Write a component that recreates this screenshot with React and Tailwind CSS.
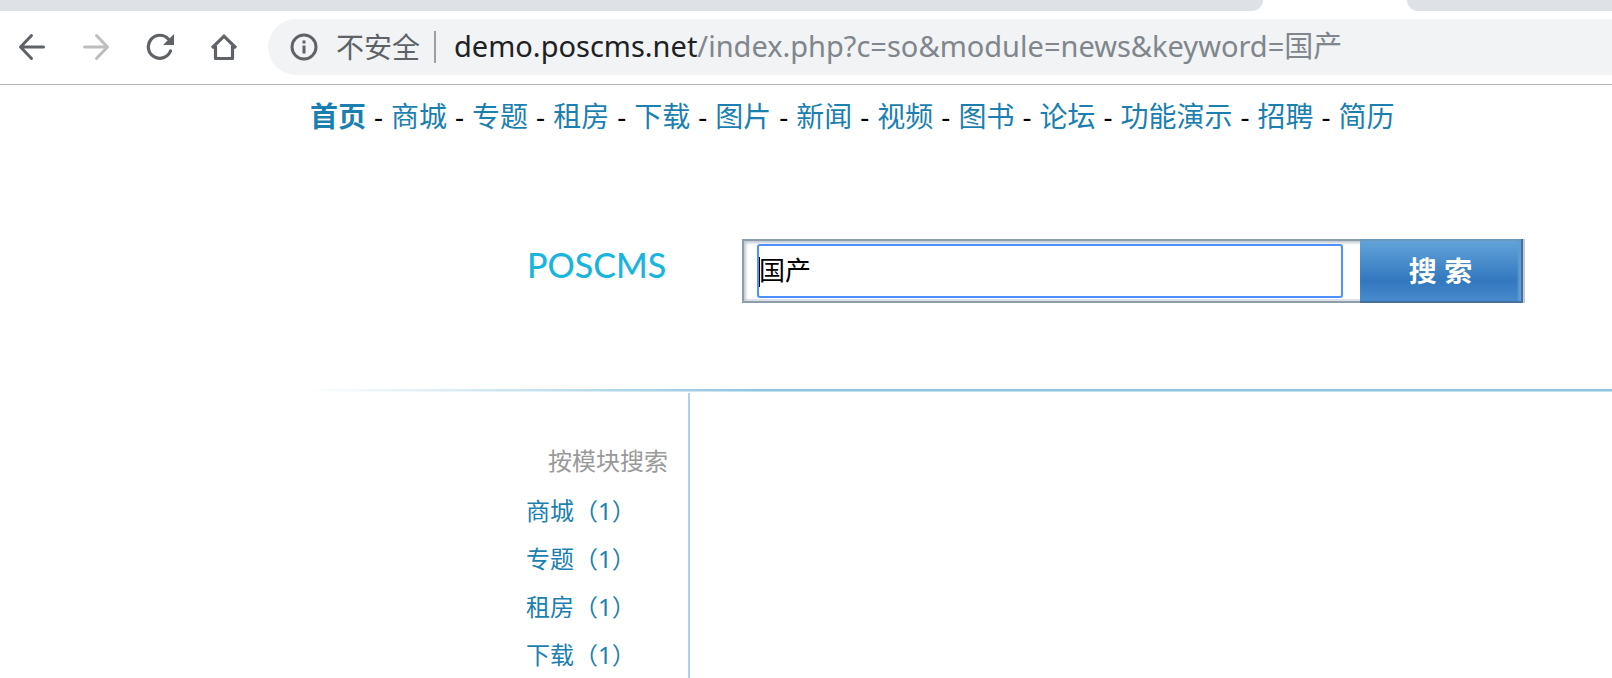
const navLinks = ['首页', '商城', '专题', '租房', '下载', '图片', '新闻', '视频', '图书', '论坛', '功能演示', '招聘', '简历'];

const modules = [
  { name: '商城', count: 1 },
  { name: '专题', count: 1 },
  { name: '租房', count: 1 },
  { name: '下载', count: 1 }
];

function BackIcon() {
  return (
    <svg width="28" height="28" viewBox="0 0 28 28" fill="none" stroke="currentColor" strokeWidth="3" strokeLinecap="round" strokeLinejoin="round">
      <path d="M25.5 14H2.500M13.500 2.500L2.500 14L13.500 25.500" />
    </svg>
  );
}

function ForwardIcon() {
  return (
    <svg width="28" height="28" viewBox="0 0 28 28" fill="none" stroke="currentColor" strokeWidth="3" strokeLinecap="round" strokeLinejoin="round">
      <path d="M2.500 14H25.500M14.500 2.500L25.500 14L14.500 25.500" />
    </svg>
  );
}

function ReloadIcon() {
  return (
    <svg width="28" height="28" viewBox="0 0 28 28" fill="none">
      <path d="M24.500 18A11.500 11.500 0 1 1 22.500 6.200" stroke="currentColor" strokeWidth="3.2" strokeLinecap="round" />
      <path d="M28 1V12H17Z" fill="currentColor" />
    </svg>
  );
}

function HomeIcon() {
  return (
    <svg width="28" height="28" viewBox="0 0 28 28" fill="none" stroke="currentColor" strokeWidth="3.2">
      <path d="M2 15L14 3.200L26 15" />
      <path d="M5.500 13V25.500H22.500V13" strokeLinejoin="round" />
    </svg>
  );
}

function InfoIcon() {
  return (
    <svg width="28" height="28" viewBox="0 0 28 28" fill="none">
      <circle cx="14" cy="14" r="12" stroke="currentColor" strokeWidth="3" />
      <path d="M12.500 7.500H15.500V10.500H12.500ZM12.500 12.500H15.500V20.500H12.500Z" fill="currentColor" />
    </svg>
  );
}

// Bottom edge of the tab strip, open where the active tab sits
function TabStrip() {
  return (
    <div className="flex h-[11px] shrink-0">
      <div className="flex-1 rounded-br-xl bg-[#dee1e6]" />
      <div className="w-36" />
      <div className="w-[205px] rounded-bl-xl bg-[#dee1e6]" />
    </div>
  );
}

function Toolbar() {
  return (
    <div className="flex h-[74px] shrink-0 items-center border-b border-[#b3b3b3] pb-0.5 pl-[18px] text-[#5f6368]">
      <div className="flex items-center gap-9">
        <button type="button" aria-label="后退"><BackIcon /></button>
        <button type="button" aria-label="前进" className="text-[#bdbdbf]"><ForwardIcon /></button>
        <button type="button" aria-label="刷新"><ReloadIcon /></button>
        <button type="button" aria-label="主页"><HomeIcon /></button>
      </div>
      <div className="ml-[30px] flex h-14 flex-1 items-center rounded-l-full bg-[#f1f3f4] pl-[22px] text-[28px] leading-9 whitespace-nowrap">
        <InfoIcon />
        <span className="ml-[18px]">不安全</span>
        <span className="mr-[18px] ml-[14px] h-8 w-0.5 bg-[#9aa0a6]" />
        <span className="pb-0.5 text-[29px] text-[#80868b]">
          <span className="text-[#202124]">demo.poscms.net</span>/index.php?c=so&amp;module=news&amp;keyword=国产
        </span>
      </div>
    </div>
  );
}

function TopNav() {
  return (
    <nav className="flex gap-2 pt-[13px] pl-[310px] text-[28px] leading-9 whitespace-nowrap text-black">
      {navLinks.map((label, i) => (
        <span key={label} className="flex gap-2">
          {i > 0 && <span>-</span>}
          <a href="#" className={i === 0 ? 'font-bold text-[#1b7fb0]' : 'text-[#1b7fb0]'}>{label}</a>
        </span>
      ))}
    </nav>
  );
}

function SearchBar() {
  return (
    <form className="flex items-center pt-[105px] pl-[527px]" onSubmit={(e) => e.preventDefault()}>
      <a href="#" className="w-[215px] pb-3 font-['Lato'] text-[34px] leading-10 font-medium text-[#1ab5de]">POSCMS</a>
      <div className="flex h-16 w-[783px] border-y-2 border-l-2 border-[#8c9dac] bg-white shadow-[inset_2px_2px_3px_#c0c9d1,inset_0_-2px_1px_#dde1e6]">
        <div className="relative flex flex-1 py-[3px] pr-[17px] pl-[13px]">
          <input
            type="text"
            aria-label="关键词"
            defaultValue="国产"
            className="w-full rounded-[3px] border-2 border-[#4d90fe] bg-white pb-0.5 text-[26px] text-black outline-none"
          />
          {/* Text caret */}
          <span className="absolute top-4 left-[15px] h-[30px] w-px bg-black" />
        </div>
        <button
          type="submit"
          className="-my-0.5 w-[165px] border-r-2 border-[#c3cad3] bg-linear-to-b from-[#64a5da] via-[#3278bf] via-65% to-[#4a8ccb] pr-0.5 text-[28px] font-bold text-white shadow-[inset_-2px_-2px_0_#4670a0,inset_0_2px_1px_#6a98bd,inset_-5px_0_2px_#5f9dd2]"
        >
          搜 索
        </button>
      </div>
    </form>
  );
}

function Sidebar() {
  return (
    <aside className="w-[690px] flex-1 overflow-hidden border-r-2 border-[#add3e4] pt-[50px] pl-[526px] text-2xl">
      <h2 className="pr-5 text-right leading-9 text-[#999999]">按模块搜索</h2>
      <ul className="mt-2 text-[#1b7fb0]">
        {modules.map((m) => (
          <li key={m.name} className="leading-[48px]">
            <a href="#">{m.name}（{m.count}）</a>
          </li>
        ))}
      </ul>
    </aside>
  );
}

export default function App() {
  return (
    <div lang="zh-CN" className="flex h-screen flex-col overflow-hidden bg-white font-['Noto_Sans','Noto_Sans_CJK_SC',sans-serif]">
      <TabStrip />
      <Toolbar />
      <TopNav />
      <SearchBar />
      <div className="mt-[86px] mb-px ml-[303px] h-[3px] shrink-0 border-b border-white/50 bg-linear-to-r from-white via-[#8dc4e0] via-35% to-[#8dc4e0]" />
      <Sidebar />
    </div>
  );
}
